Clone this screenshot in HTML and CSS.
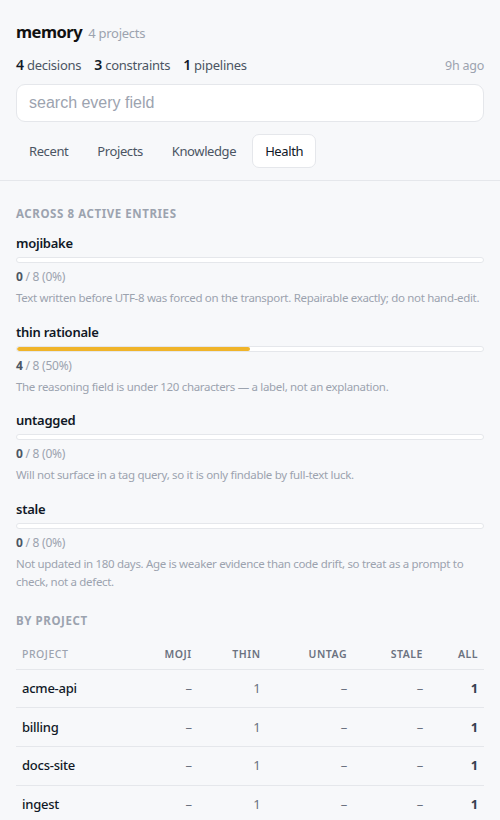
FILE: index.html
```html
<!DOCTYPE html>
<html>
<head>
<meta charset="utf-8">
<link rel="stylesheet" href="styles.css">
</head>
<body>
<header class="top">
  <div class="title-row">
    <h1 class="title">memory</h1>
    <span class="sub">4 projects</span>
  </div>
  <div class="stats-row">
    <div class="stats">
      <span class="stat"><b>4</b> decisions</span>
      <span class="stat"><b>3</b> constraints</span>
      <span class="stat"><b>1</b> pipelines</span>
    </div>
    <span class="ago">9h ago</span>
  </div>
  <input class="search" type="text" placeholder="search every field">
  <nav class="tabs">
    <span class="tab">Recent</span>
    <span class="tab">Projects</span>
    <span class="tab">Knowledge</span>
    <span class="tab active">Health</span>
  </nav>
</header>
<main class="content">
  <h2 class="section">Across 8 active entries</h2>
  <div class="metric">
    <div class="m-name">mojibake</div>
    <div class="bar"><div class="fill" style="width:0%"></div></div>
    <div class="m-count"><b>0</b> / 8 (0%)</div>
    <div class="m-desc">Text written before UTF-8 was forced on the transport. Repairable exactly; do not hand-edit.</div>
  </div>
  <div class="metric">
    <div class="m-name">thin rationale</div>
    <div class="bar"><div class="fill" style="width:50%"></div></div>
    <div class="m-count"><b>4</b> / 8 (50%)</div>
    <div class="m-desc">The reasoning field is under 120 characters — a label, not an explanation.</div>
  </div>
  <div class="metric">
    <div class="m-name">untagged</div>
    <div class="bar"><div class="fill" style="width:0%"></div></div>
    <div class="m-count"><b>0</b> / 8 (0%)</div>
    <div class="m-desc">Will not surface in a tag query, so it is only findable by full-text luck.</div>
  </div>
  <div class="metric">
    <div class="m-name">stale</div>
    <div class="bar"><div class="fill" style="width:0%"></div></div>
    <div class="m-count"><b>0</b> / 8 (0%)</div>
    <div class="m-desc">Not updated in 180 days. Age is weaker evidence than code drift, so treat as a prompt to check, not a defect.</div>
  </div>
  <h2 class="section by">By project</h2>
  <table class="tbl">
    <thead>
      <tr><th class="l">Project</th><th>Moji</th><th>Thin</th><th>Untag</th><th>Stale</th><th>All</th></tr>
    </thead>
    <tbody>
      <tr><td class="l">acme-api</td><td>–</td><td>1</td><td>–</td><td>–</td><td class="all">1</td></tr>
      <tr><td class="l">billing</td><td>–</td><td>1</td><td>–</td><td>–</td><td class="all">1</td></tr>
      <tr><td class="l">docs-site</td><td>–</td><td>1</td><td>–</td><td>–</td><td class="all">1</td></tr>
      <tr><td class="l">ingest</td><td>–</td><td>1</td><td>–</td><td>–</td><td class="all">1</td></tr>
    </tbody>
  </table>
</main>
</body>
</html>
```
FILE: styles.css
```css
* { box-sizing: border-box; }
html, body { margin: 0; padding: 0; }
body {
  background: #f7f8fa;
  font-family: "Noto Sans", "Open Sans", sans-serif;
  color: #111827;
  width: 500px;
  overflow: hidden;
  letter-spacing: -0.25px;
}
.top {
  padding: 20px 16px 12px;
  border-bottom: 1px solid #e5e7eb;
}
.title-row { display: flex; align-items: baseline; gap: 6px; }
.title { margin: 0; font-size: 16.5px; font-weight: 700; color: #111; letter-spacing: -0.5px; }
.sub { font-size: 13px; color: #9ca3af; }
.stats-row {
  display: flex; justify-content: space-between; align-items: baseline;
  margin-top: 12px;
}
.stats { display: flex; gap: 13px; font-size: 13px; color: #4b5563; }
.stat b { font-weight: 600; color: #111827; font-size: 14px; }
.ago { font-size: 12.5px; color: #9ca3af; }
.search {
  display: block;
  width: 100%;
  height: 38px;
  margin-top: 10px;
  border: 1px solid #e5e7eb;
  border-radius: 9px;
  background: #fff;
  padding: 0 12px;
  font-family: "Liberation Sans", Arial, sans-serif;
  font-size: 16px;
  letter-spacing: 0;
  color: #111;
  outline: none;
}
.search::placeholder { color: #9ca3af; }
.tabs { display: flex; gap: 3px; margin-top: 12px; }
.tab {
  font-size: 13px;
  color: #4b5563;
  padding: 7px 12px 7px;
  border: 1px solid transparent;
  border-radius: 7px;
  line-height: 18px;
  letter-spacing: -0.4px;
}
.tab.active { background: #fff; border-color: #e5e7eb; color: #111827; }
.content { padding: 25px 16px 0; }
.section {
  margin: 0 0 13px;
  font-size: 11.5px;
  font-weight: 700;
  letter-spacing: 0.05em;
  text-transform: uppercase;
  color: #9ca3af;
}
.metric { margin-bottom: 15.5px; }
.m-name { font-size: 13px; font-weight: 600; color: #111827; line-height: 18px; }
.bar {
  margin-top: 5px;
  height: 6px;
  background: #fff;
  border: 1px solid #e5e7eb;
  border-radius: 4px;
  overflow: hidden;
}
.fill { height: 100%; background: #f0b429; border-radius: 4px; }
.m-count { font-size: 12px; color: #9ca3af; margin-top: 6px; line-height: 16px; }
.m-count b { color: #4b5563; font-weight: 700; }
.m-desc { font-size: 11.5px; color: #9ca3af; margin-top: 4px; line-height: 18px; letter-spacing: -0.32px; }
.section.by { margin-top: 22px; margin-bottom: 11px; }
.tbl { width: 100%; border-collapse: collapse; }
.tbl th {
  font-size: 10.5px; font-weight: 600; letter-spacing: 0.05em;
  text-transform: uppercase; color: #6b7280; text-align: right;
  padding: 8px 6px 8px; border-bottom: 1px solid #e5e7eb;
}
.tbl th.l { color: #9ca3af; font-weight: 500; }
.tbl td {
  font-size: 13px; color: #6b7280; text-align: right;
  padding: 9.5px 6px 9.2px; border-bottom: 1px solid #e5e7eb;
  line-height: 19px;
}
.tbl .l { text-align: left; }
.tbl td.l { color: #111827; font-weight: 500; }
.tbl td.all { font-weight: 700; color: #374151; }
```
